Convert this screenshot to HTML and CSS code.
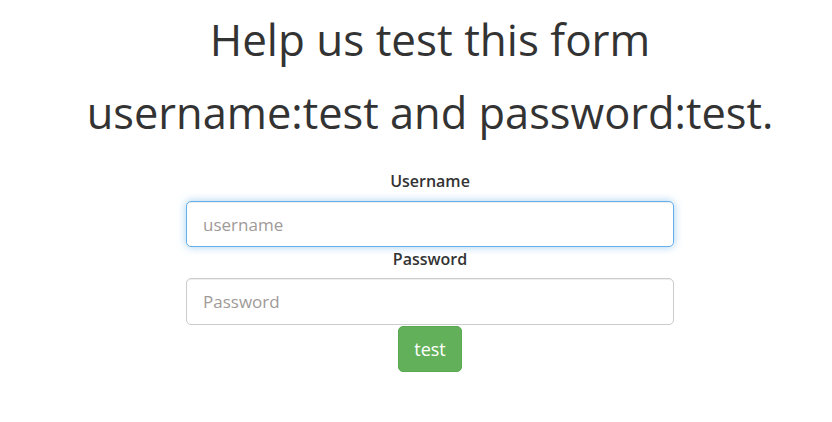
FILE: index.html
```html
<!DOCTYPE html>
<html>
<head>
<meta charset="utf-8">
<link rel="stylesheet" href="styles.css">
</head>
<body>
<div class="page">
  <h1 class="title">Help us test this form</h1>
  <h2 class="subtitle">username:test and password:test.</h2>
  <form class="login">
    <label class="field-label" for="u">Username</label>
    <input id="u" class="field field-focus" type="text" placeholder="username">
    <label class="field-label" for="p">Password</label>
    <input id="p" class="field" type="password" placeholder="Password">
    <button type="button" class="btn-test">test</button>
  </form>
</div>
</body>
</html>
```
FILE: styles.css
```css
html, body {
  margin: 0;
  padding: 0;
  background: #fff;
}
body {
  font-family: "Open Sans", "Noto Sans", sans-serif;
  color: #333;
}
.page {
  padding-left: 28px;
  display: flex;
  flex-direction: column;
  align-items: center;
}
.title {
  margin: 9px 0 0;
  font-size: 44px;
  font-weight: 400;
  line-height: 60px;
  color: #333;
}
.subtitle {
  margin: 14px 0 0;
  font-size: 43.4px;
  font-weight: 400;
  line-height: 60px;
  color: #333;
}
.login {
  margin-top: 27px;
  width: 488px;
  display: flex;
  flex-direction: column;
  align-items: center;
}
.field-label {
  font-size: 16px;
  font-weight: 600;
  line-height: 22px;
  margin-bottom: 9px;
  color: #333;
}
.field {
  box-sizing: border-box;
  width: 100%;
  height: 46px;
  padding: 10px 16px;
  font-family: "Open Sans", sans-serif;
  font-size: 17px;
  color: #555;
  border: 1px solid #ccc;
  border-radius: 5px;
  outline: none;
  box-shadow: inset 0 1px 1px rgba(0,0,0,.075);
}
.field::placeholder {
  color: #a09a98;
}
.field-focus {
  border-color: #66afe9;
  box-shadow: inset 0 1px 1px rgba(0,0,0,.075), 0 0 8px rgba(102,175,233,.6);
}
.field + .field-label {
  margin-top: 1px;
  margin-bottom: 8px;
}
.btn-test {
  margin-top: 1px;
  height: 46px;
  padding: 0 15px;
  font-family: "Open Sans", sans-serif;
  font-size: 18px;
  color: #fff;
  background: #62b15a;
  border: 1px solid #5aa952;
  border-radius: 5px;
}
.field:not(.field-focus) {
  height: 47px;
}
```
